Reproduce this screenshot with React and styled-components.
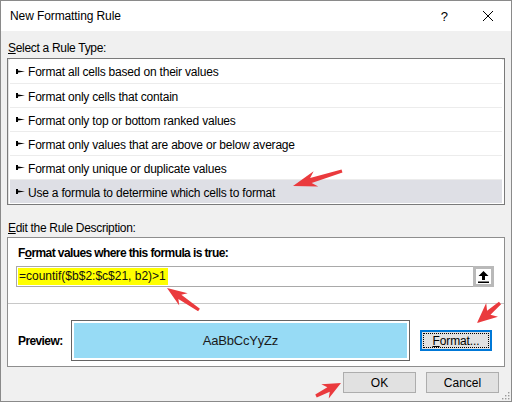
import React from 'react';
import styled, { createGlobalStyle } from 'styled-components';

const GlobalStyle = createGlobalStyle`
  html, body {
    margin: 0;
    padding: 0;
    background: #ffffff;
  }
  body {
    font-family: "Liberation Sans", Arial, sans-serif;
    font-size: 12px;
    color: #000;
  }
`;

const rules = [
  'Format all cells based on their values',
  'Format only cells that contain',
  'Format only top or bottom ranked values',
  'Format only values that are above or below average',
  'Format only unique or duplicate values',
  'Use a formula to determine which cells to format',
];

const arrows = [
  { tail: [342, 171], tip: [293, 186], head: 24, wide: 8 },
  { tail: [199, 310], tip: [167, 288], head: 20, wide: 7.5 },
  { tail: [500, 303], tip: [477, 323], head: 20, wide: 9 },
  { tail: [316, 396], tip: [341, 383], head: 18, wide: 8 },
];

function Arrow({ tail, tip, head, wide }) {
  const dx = tip[0] - tail[0];
  const dy = tip[1] - tail[1];
  const len = Math.sqrt(dx * dx + dy * dy);
  const angle = (Math.atan2(dy, dx) * 180) / Math.PI;
  const pts = [
    [0, 0],
    [-head, -wide],
    [-head * 0.78, -2.6],
    [-len, -1.6],
    [-len, 1.6],
    [-head * 0.78, 2.6],
    [-head, wide],
  ]
    .map((p) => p.join(','))
    .join(' ');
  return (
    <g transform={`translate(${tip[0]} ${tip[1]}) rotate(${angle})`}>
      <polygon points={pts} fill="#ea3a3d" />
    </g>
  );
}

function RuleGlyph() {
  return (
    <svg width="9" height="5" viewBox="0 0 9 5">
      <rect x="0" y="0" width="2" height="5" fill="#000" />
      <polygon points="2,1.5 9,2.5 2,3.5" fill="#000" />
    </svg>
  );
}

function App() {
  return (
    <>
      <GlobalStyle />
      <Window>
        <TitleBar>
          <Title>New Formatting Rule</Title>
          <TitleButtons>
            <Help>?</Help>
            <svg width="12" height="12" viewBox="0 0 12 12">
              <path d="M1 1 L11 11 M11 1 L1 11" stroke="#000" strokeWidth="1" />
            </svg>
          </TitleButtons>
        </TitleBar>

        <Body>
          <SectionLabel $top={10}>
            <u>S</u>elect a Rule Type:
          </SectionLabel>
          <RuleList>
            {rules.map((r, i) => (
              <RuleRow key={r} $selected={i === rules.length - 1}>
                <RuleGlyph />
                <span>{r}</span>
              </RuleRow>
            ))}
          </RuleList>

          <SectionLabel $top={16}>
            <u>E</u>dit the Rule Description:
          </SectionLabel>
          <Panel>
            <BoldLabel>
              F<u>o</u>rmat values where this formula is true:
            </BoldLabel>
            <FormulaBox>
              <FormulaText>
                <Highlight>=countif($b$2:$c$21, b2)&gt;1</Highlight>
              </FormulaText>
              <CollapseButton>
                <svg width="11" height="12" viewBox="0 0 11 12">
                  <polygon points="5.5,0 10.5,5 7,5 7,9 4,9 4,5 0.5,5" fill="#000" />
                  <rect x="0" y="10.5" width="11" height="1.5" fill="#000" />
                </svg>
              </CollapseButton>
            </FormulaBox>
            <Divider />
            <PreviewRow>
              <PreviewLabel>Preview:</PreviewLabel>
              <PreviewBox>
                <PreviewFill>AaBbCcYyZz</PreviewFill>
              </PreviewBox>
              <FormatButton>
                <FocusRing>
                  <u>F</u>ormat...
                </FocusRing>
              </FormatButton>
            </PreviewRow>
          </Panel>

          <ButtonRow>
            <DialogButton>OK</DialogButton>
            <DialogButton>Cancel</DialogButton>
          </ButtonRow>
        </Body>

        <Grip width="10" height="10" viewBox="0 0 10 10">
          {[
            [8, 2],
            [5, 5],
            [8, 5],
            [2, 8],
            [5, 8],
            [8, 8],
          ].map(([x, y]) => (
            <rect key={`${x}-${y}`} x={x} y={y} width="1.4" height="1.4" fill="#9a9a9a" />
          ))}
        </Grip>

        <Annotations width="512" height="402" viewBox="0 0 512 402">
          {arrows.map((a, i) => (
            <Arrow key={i} {...a} />
          ))}
        </Annotations>
      </Window>
    </>
  );
}

const Window = styled.div`
  position: relative;
  width: 512px;
  height: 402px;
  box-sizing: border-box;
  border: 1px solid #8a8a8a;
  display: flex;
  flex-direction: column;
  overflow: hidden;
`;

const TitleBar = styled.div`
  height: 30px;
  flex: none;
  background: #ffffff;
  display: flex;
  align-items: center;
  justify-content: space-between;
  padding-left: 9px;
`;

const Title = styled.div`
  font-size: 12px;
  letter-spacing: -0.1px;
  color: #000;
`;

const TitleButtons = styled.div`
  display: flex;
  align-items: center;
  gap: 34px;
  padding-right: 17px;
`;

const Help = styled.span`
  font-size: 13px;
`;

const Body = styled.div`
  flex: 1;
  background: #f0f0f0;
  padding: 0 6px;
  display: flex;
  flex-direction: column;
`;

const SectionLabel = styled.div`
  margin-top: ${(p) => p.$top}px;
  margin-bottom: 1px;
  padding-left: 1px;
  line-height: 15px;
  height: 15px;
  letter-spacing: -0.3px;
`;

const RuleList = styled.div`
  margin-top: 1px;
  background: #ffffff;
  border: 1px solid #7a7a7a;
  box-shadow: inset 1px 1px 0 #e3e3e3;
  padding: 0 2px 1px 2px;
`;

const RuleRow = styled.div`
  height: 24px;
  box-sizing: border-box;
  display: flex;
  align-items: center;
  gap: 3px;
  padding-left: 6px;
  letter-spacing: -0.2px;
  background: ${(p) => (p.$selected ? '#dedfe5' : '#ffffff')};

  & + & {
    border-top: 1px solid #ececec;
  }

  span {
    padding-top: 2px;
  }
`;

const Panel = styled.div`
  background: #ffffff;
  border: 1px solid #8e8e8e;
  height: 130px;
  box-sizing: border-box;
  padding-top: 8px;
  display: flex;
  flex-direction: column;
`;

const BoldLabel = styled.div`
  font-weight: bold;
  font-size: 12px;
  letter-spacing: -0.6px;
  line-height: 15px;
  padding-left: 10px;
`;

const FormulaBox = styled.div`
  margin: 5px 0 0 8px;
  width: 478px;
  height: 21px;
  box-sizing: border-box;
  border: 1px solid #a9a9a9;
  display: flex;
  align-items: stretch;
`;

const FormulaText = styled.div`
  flex: 1;
  display: flex;
  align-items: center;
  padding-left: 1px;
`;

const Highlight = styled.span`
  background: #ffff00;
  padding: 1px 2px 1px 1px;
  line-height: 15px;
  color: #111;
`;

const CollapseButton = styled.div`
  width: 21px;
  margin: -1px -1px -1px 0;
  box-sizing: border-box;
  border: 3px solid #b9b9b9;
  background: #ffffff;
  display: flex;
  align-items: center;
  justify-content: center;
`;

const Divider = styled.div`
  margin-top: 16px;
  height: 1px;
  background: #c8c8c8;
`;

const PreviewRow = styled.div`
  margin-top: 16px;
  display: flex;
  align-items: center;
  padding-left: 10px;
`;

const PreviewLabel = styled.div`
  width: 53px;
  font-weight: bold;
  font-size: 12px;
  letter-spacing: -0.6px;
`;

const PreviewBox = styled.div`
  width: 339px;
  height: 41px;
  box-sizing: border-box;
  border: 1px solid #646464;
  padding: 2px;
  background: #ffffff;
`;

const PreviewFill = styled.div`
  height: 100%;
  background: #97dbf5;
  display: flex;
  align-items: center;
  justify-content: center;
  font-size: 13px;
  letter-spacing: -0.2px;
  color: #1a1a1a;
`;

const FormatButton = styled.div`
  margin-left: 10px;
  width: 72px;
  height: 21px;
  box-sizing: border-box;
  border: 2px solid #0078d7;
  background: #e1e1e1;
  padding: 1px;
  display: flex;
`;

const FocusRing = styled.div`
  flex: 1;
  border: 1px dotted #000;
  display: flex;
  align-items: center;
  justify-content: center;
  letter-spacing: -0.1px;
`;

const ButtonRow = styled.div`
  margin-top: 5px;
  display: flex;
  justify-content: flex-end;
  gap: 10px;
  padding-right: 6px;
`;

const DialogButton = styled.div`
  width: 73px;
  height: 21px;
  box-sizing: border-box;
  border: 1px solid #adadad;
  background: #e1e1e1;
  display: flex;
  align-items: center;
  justify-content: center;
`;

const Grip = styled.svg`
  position: absolute;
  right: 1px;
  bottom: 1px;
`;

const Annotations = styled.svg`
  position: absolute;
  left: -1px;
  top: -1px;
  pointer-events: none;
`;

export default App;
